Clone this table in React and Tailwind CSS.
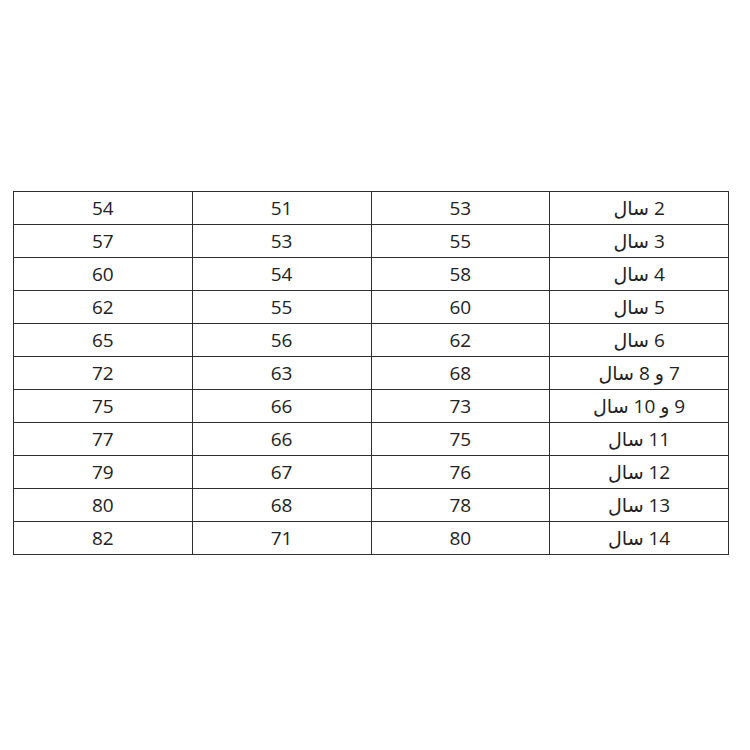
import React from 'react';

const rows = [
  ['2 سال', '53', '51', '54'],
  ['3 سال', '55', '53', '57'],
  ['4 سال', '58', '54', '60'],
  ['5 سال', '60', '55', '62'],
  ['6 سال', '62', '56', '65'],
  ['7 و 8 سال', '68', '63', '72'],
  ['9 و 10 سال', '73', '66', '75'],
  ['11 سال', '75', '66', '77'],
  ['12 سال', '76', '67', '79'],
  ['13 سال', '78', '68', '80'],
  ['14 سال', '80', '71', '82'],
];

export default function App() {
  return (
    <div
      className="w-[750px] h-[750px] bg-white pt-[191px] pl-[13px]"
      style={{ fontFamily: '"Open Sans", "DejaVu Sans", sans-serif' }}
    >
      <table dir="rtl" className="w-[716px] border-collapse table-fixed text-[19px] text-[#222]">
        <tbody>
          {rows.map((row, i) => (
            <tr key={i} className="h-[33px]">
              {row.map((cell, j) => (
                <td key={j} className="border border-[#2e2e2e] text-center p-0 pt-px leading-none">
                  {cell}
                </td>
              ))}
            </tr>
          ))}
        </tbody>
      </table>
    </div>
  );
}
